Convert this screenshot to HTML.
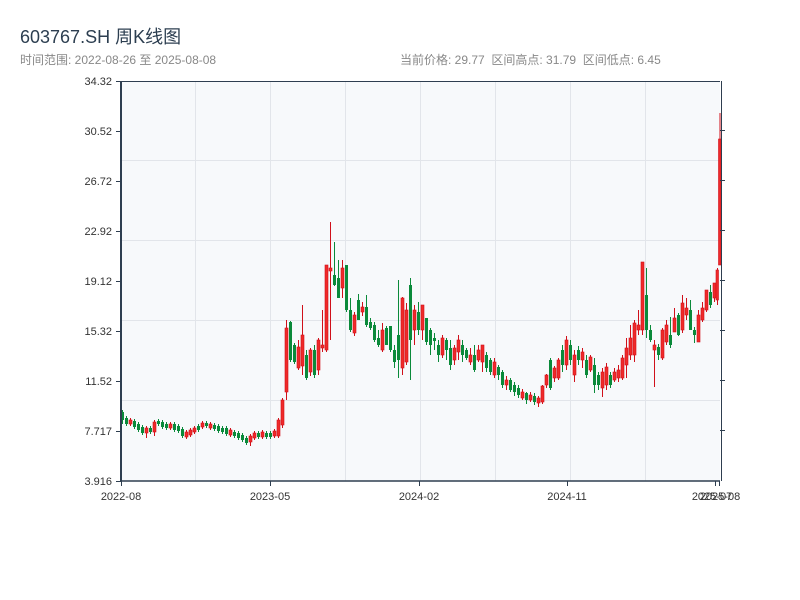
<!DOCTYPE html>
<html><head><meta charset="utf-8"><style>
body{margin:0;background:#fff;width:800px;height:600px;overflow:hidden;font-family:"Liberation Sans","Noto Sans CJK SC",sans-serif;position:relative}
.t{position:absolute;left:20px;top:23px;font-size:18px;color:#2c3e50}
.s{position:absolute;top:51px;font-size:12px;color:#888}
svg{position:absolute;left:0;top:0}
svg text{font-family:"Liberation Sans",sans-serif;font-size:11px;fill:#333}
.r{fill:#ef2a2a;stroke:#d0101a;stroke-width:.6}
.g{fill:#0a8a3a}
</style></head><body>
<div class="t">603767.SH 周K线图</div>
<div class="s" style="left:20px">时间范围: 2022-08-26 至 2025-08-08</div>
<div class="s" style="left:400px">当前价格: 29.77 &nbsp;区间高点: 31.79 &nbsp;区间低点: 6.45</div>
<svg width="800" height="600" xmlns="http://www.w3.org/2000/svg">
<rect x="121" y="81" width="599" height="400" fill="#f7f9fb"/>
<g stroke="#e2e5ea" stroke-width="1">
<line x1="121" y1="160.5" x2="720" y2="160.5"/><line x1="121" y1="240.5" x2="720" y2="240.5"/><line x1="121" y1="320.5" x2="720" y2="320.5"/><line x1="121" y1="400.5" x2="720" y2="400.5"/>
<line x1="195.5" y1="81" x2="195.5" y2="481"/><line x1="270.5" y1="81" x2="270.5" y2="481"/><line x1="345.5" y1="81" x2="345.5" y2="481"/><line x1="420.5" y1="81" x2="420.5" y2="481"/><line x1="495.5" y1="81" x2="495.5" y2="481"/><line x1="570.5" y1="81" x2="570.5" y2="481"/><line x1="645.5" y1="81" x2="645.5" y2="481"/>
</g>
<path stroke="#0a8a3a" stroke-width="1" fill="none" d="M122.5 410V424M126.5 416V426M134.5 419V429M138.5 422V432M142.5 425V435M150.5 426V434M158.5 419V426M162.5 420V429M166.5 422V430M174.5 422V432M178.5 424V433M182.5 427V438M198.5 424V432M206.5 421V428M214.5 423V431M218.5 424V433M222.5 426V434M226.5 426V436M234.5 430V438M238.5 431V440M242.5 433V442M246.5 436V445M258.5 431V439M266.5 431V439M270.5 431V439M290.5 321V362M294.5 343V364M306.5 350V380M314.5 345V378M334.5 242V286M338.5 260V298M346.5 265V312M350.5 298V332M358.5 294V320M366.5 295V327M370.5 318V330M374.5 322V342M378.5 330V347M386.5 326V345M390.5 326V352M394.5 345V368M398.5 280V378M410.5 278V380M418.5 302V335M426.5 318V345M430.5 328V355M434.5 333V350M438.5 340V362M446.5 338V360M450.5 340V370M462.5 340V362M466.5 348V360M474.5 345V372M486.5 352V372M490.5 358V375M498.5 365V380M502.5 370V388M510.5 378V392M514.5 382V396M518.5 385V398M526.5 392V404M534.5 393V405M550.5 358V390M562.5 345V372M570.5 340V365M578.5 346V365M586.5 355V378M594.5 358V393M598.5 372V390M610.5 372V388M646.5 268V338M650.5 325V342M658.5 344V360M670.5 317V348M678.5 313V336M690.5 300V330M694.5 327V343M710.5 285V308"/>
<path stroke="#d0101a" stroke-width="1" fill="none" d="M130.5 418V426M146.5 426V438M154.5 420V436M170.5 422V430M186.5 430V439M190.5 428V437M194.5 426V434M202.5 421V429M210.5 422V430M230.5 428V437M250.5 434V446M254.5 431V440M262.5 430V439M274.5 429V438M278.5 418V438M282.5 398V428M286.5 320V400M298.5 340V370M302.5 305V375M310.5 348V376M318.5 338V375M322.5 310V352M326.5 265V352M330.5 222V340M342.5 260V298M354.5 312V336M362.5 302V316M382.5 323V352M402.5 297V375M406.5 303V365M414.5 305V345M422.5 305V340M442.5 335V358M454.5 345V365M458.5 335V360M470.5 348V365M478.5 345V362M482.5 345V372M494.5 358V378M506.5 376V390M522.5 389V400M530.5 392V402M538.5 396V407M542.5 385V404M546.5 374V388M554.5 366V382M558.5 358V380M566.5 336V370M574.5 350V382M582.5 348V368M590.5 355V372M602.5 368V397M606.5 363V390M614.5 368V382M618.5 365V382M622.5 355V380M626.5 338V378M630.5 325V360M634.5 320V362M638.5 310V335M642.5 262V335M654.5 340V387M662.5 328V360M666.5 320V345M674.5 308V332M682.5 295V333M686.5 298V320M698.5 310V342M702.5 302V322M706.5 290V312M714.5 283V302M717.5 268V305M720 113V265"/>
<g class="g">
<rect x="121" y="412" width="3" height="8"/><rect x="125" y="418" width="3" height="6"/><rect x="133" y="421" width="3" height="6"/><rect x="137" y="424" width="3" height="6"/><rect x="141" y="427" width="3" height="6"/><rect x="149" y="428" width="3" height="4"/><rect x="157" y="421" width="3" height="3"/><rect x="161" y="422" width="3" height="5"/><rect x="165" y="424" width="3" height="4"/><rect x="173" y="424" width="3" height="6"/><rect x="177" y="426" width="3" height="5"/><rect x="181" y="429" width="3" height="7"/><rect x="197" y="426" width="3" height="4"/><rect x="205" y="423" width="3" height="3"/><rect x="213" y="425" width="3" height="4"/><rect x="217" y="426" width="3" height="5"/><rect x="221" y="428" width="3" height="4"/><rect x="225" y="428" width="3" height="6"/><rect x="233" y="432" width="3" height="4"/><rect x="237" y="433" width="3" height="5"/><rect x="241" y="435" width="3" height="5"/><rect x="245" y="438" width="3" height="5"/><rect x="257" y="433" width="3" height="4"/><rect x="265" y="433" width="3" height="4"/><rect x="269" y="433" width="3" height="4"/>
<rect x="289" y="322" width="3" height="38"/><rect x="293" y="345" width="3" height="17"/><rect x="305" y="355" width="3" height="23"/><rect x="313" y="350" width="3" height="25"/><rect x="333" y="275" width="3" height="10"/><rect x="337" y="278" width="3" height="20"/><rect x="345" y="265" width="3" height="45"/><rect x="349" y="310" width="3" height="20"/><rect x="357" y="300" width="3" height="20"/><rect x="365" y="307" width="3" height="18"/><rect x="369" y="322" width="3" height="6"/><rect x="373" y="325" width="3" height="15"/><rect x="377" y="338" width="3" height="7"/><rect x="385" y="328" width="3" height="17"/><rect x="389" y="326" width="3" height="24"/><rect x="393" y="350" width="3" height="12"/><rect x="397" y="335" width="3" height="25"/><rect x="409" y="285" width="3" height="55"/><rect x="417" y="312" width="3" height="18"/><rect x="425" y="318" width="3" height="24"/><rect x="429" y="330" width="3" height="15"/><rect x="433" y="338" width="3" height="3"/><rect x="437" y="345" width="3" height="10"/><rect x="445" y="340" width="3" height="10"/><rect x="449" y="348" width="3" height="17"/><rect x="461" y="345" width="3" height="10"/><rect x="465" y="350" width="3" height="8"/><rect x="473" y="355" width="3" height="15"/><rect x="485" y="355" width="3" height="13"/><rect x="489" y="360" width="3" height="12"/><rect x="497" y="367" width="3" height="8"/><rect x="501" y="372" width="3" height="13"/><rect x="509" y="380" width="3" height="10"/><rect x="513" y="385" width="3" height="7"/><rect x="517" y="388" width="3" height="7"/><rect x="525" y="393" width="3" height="7"/><rect x="533" y="396" width="3" height="6"/><rect x="549" y="360" width="3" height="28"/><rect x="561" y="350" width="3" height="15"/><rect x="569" y="345" width="3" height="15"/><rect x="577" y="350" width="3" height="10"/><rect x="585" y="360" width="3" height="15"/><rect x="593" y="365" width="3" height="20"/><rect x="597" y="375" width="3" height="10"/><rect x="609" y="375" width="3" height="10"/><rect x="645" y="295" width="3" height="35"/><rect x="649" y="330" width="3" height="10"/><rect x="657" y="347" width="3" height="8"/><rect x="669" y="335" width="3" height="10"/><rect x="677" y="315" width="3" height="20"/><rect x="689" y="310" width="3" height="20"/><rect x="693" y="330" width="3" height="5"/><rect x="709" y="292" width="3" height="13"/>
</g>
<g class="r">
<rect x="129" y="420" width="3" height="4"/><rect x="145" y="428" width="3" height="5"/><rect x="153" y="422" width="3" height="10"/><rect x="169" y="424" width="3" height="4"/><rect x="185" y="432" width="3" height="5"/><rect x="189" y="430" width="3" height="5"/><rect x="193" y="428" width="3" height="4"/><rect x="201" y="423" width="3" height="4"/><rect x="209" y="424" width="3" height="4"/><rect x="229" y="430" width="3" height="5"/><rect x="249" y="436" width="3" height="6"/><rect x="253" y="433" width="3" height="5"/><rect x="261" y="432" width="3" height="5"/><rect x="273" y="431" width="3" height="5"/><rect x="277" y="420" width="3" height="16"/><rect x="281" y="400" width="3" height="25"/><rect x="285" y="328" width="3" height="64"/>
<rect x="297" y="347" width="3" height="21"/><rect x="301" y="335" width="3" height="31"/><rect x="309" y="350" width="3" height="22"/><rect x="317" y="340" width="3" height="30"/><rect x="321" y="345" width="3" height="3"/><rect x="325" y="265" width="3" height="85"/><rect x="329" y="268" width="3" height="3"/><rect x="341" y="268" width="3" height="20"/><rect x="353" y="315" width="3" height="18"/><rect x="361" y="307" width="3" height="5"/><rect x="381" y="330" width="3" height="20"/><rect x="401" y="298" width="3" height="70"/><rect x="405" y="310" width="3" height="52"/><rect x="413" y="310" width="3" height="20"/><rect x="421" y="305" width="3" height="25"/><rect x="441" y="338" width="3" height="17"/><rect x="453" y="348" width="3" height="12"/><rect x="457" y="340" width="3" height="12"/><rect x="469" y="355" width="3" height="7"/><rect x="477" y="350" width="3" height="10"/><rect x="481" y="345" width="3" height="17"/><rect x="493" y="362" width="3" height="13"/><rect x="505" y="380" width="3" height="5"/><rect x="521" y="392" width="3" height="6"/><rect x="529" y="395" width="3" height="5"/><rect x="537" y="398" width="3" height="5"/><rect x="541" y="386" width="3" height="16"/><rect x="545" y="375" width="3" height="10"/><rect x="553" y="368" width="3" height="10"/><rect x="557" y="360" width="3" height="18"/><rect x="565" y="340" width="3" height="25"/><rect x="573" y="355" width="3" height="20"/><rect x="581" y="352" width="3" height="8"/><rect x="589" y="357" width="3" height="13"/><rect x="601" y="372" width="3" height="16"/><rect x="605" y="367" width="3" height="18"/><rect x="613" y="372" width="3" height="8"/><rect x="617" y="370" width="3" height="8"/><rect x="621" y="358" width="3" height="20"/><rect x="625" y="348" width="3" height="17"/><rect x="629" y="338" width="3" height="17"/><rect x="633" y="323" width="3" height="32"/><rect x="637" y="325" width="3" height="5"/><rect x="641" y="262" width="3" height="68"/><rect x="653" y="345" width="3" height="5"/><rect x="661" y="330" width="3" height="28"/><rect x="665" y="325" width="3" height="17"/><rect x="673" y="318" width="3" height="14"/><rect x="681" y="303" width="3" height="27"/><rect x="685" y="308" width="3" height="7"/><rect x="697" y="315" width="3" height="27"/><rect x="701" y="308" width="3" height="12"/><rect x="705" y="290" width="3" height="20"/><rect x="713" y="283" width="3" height="15"/><rect x="716" y="270" width="2.5" height="30"/><rect x="718.5" y="139" width="2.5" height="126"/>
</g>
<g stroke="#2e3e50" stroke-width="1">
<line x1="121" y1="81.5" x2="720" y2="81.5"/>
<line x1="121" y1="81" x2="121" y2="481" stroke-width="2"/>
<line x1="121" y1="481" x2="720" y2="481" stroke-width="1.5"/>
<path d="M116 81.5h5M116 131.5h5M116 181.5h5M116 231.5h5M116 281.5h5M116 331.5h5M116 381.5h5M116 431.5h5M116 481.5h5M720 130.5h5M720 180.5h5M720 230.5h5M720 280.5h5M720 330.5h5M720 380.5h5M720 430.5h5M121.5 481v5M270.5 481v5M419.5 481v5M567.5 481v5M715.5 481v5M719.5 481v5"/>
</g>
<line x1="721.5" y1="81" x2="721.5" y2="481" stroke="#2e3e50" stroke-width="1"/>
<g text-anchor="end">
<text x="112" y="85">34.32</text><text x="112" y="135">30.52</text><text x="112" y="185">26.72</text><text x="112" y="235">22.92</text><text x="112" y="285">19.12</text><text x="112" y="335">15.32</text><text x="112" y="385">11.52</text><text x="112" y="435">7.717</text><text x="112" y="485">3.916</text>
</g>
<g text-anchor="middle">
<text x="121" y="500">2022-08</text><text x="270" y="500">2023-05</text><text x="419" y="500">2024-02</text><text x="567" y="500">2024-11</text><text x="712" y="500">2025-07</text><text x="720" y="500">2025-08</text>
</g>
</svg>
</body></html>
